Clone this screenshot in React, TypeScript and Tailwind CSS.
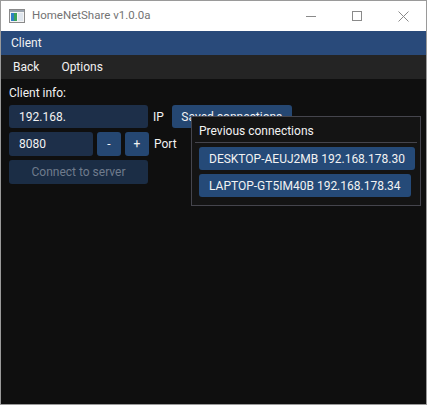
import React from "react";

const connections = [
  { host: "DESKTOP-AEUJ2MB", ip: "192.168.178.30" },
  { host: "LAPTOP-GT5IM40B", ip: "192.168.178.34" },
];

function AppIcon() {
  return (
    <svg width="16" height="14" viewBox="0 0 16 14">
      <rect x="0.5" y="0.5" width="15" height="13" fill="#f4f4f4" stroke="#8a8a8a" />
      <rect x="1" y="1" width="14" height="2" fill="#9aa4b0" />
      <rect x="2" y="4" width="3" height="8" fill="#2f7fc4" />
      <rect x="5" y="4" width="3" height="8" fill="#3aa35a" />
      <rect x="9" y="4" width="5" height="8" fill="#dfe6ee" />
    </svg>
  );
}

function TitleBar() {
  return (
    <div className="flex h-[30px] items-center bg-white">
      <div className="ml-[8px] flex w-[16px] items-center">
        <AppIcon />
      </div>
      <span className="ml-[7px] text-[11.5px] text-[#737373]">HomeNetShare v1.0.0a</span>
      <div className="ml-auto flex h-full items-center">
        <div className="flex w-[46px] items-center justify-center">
          <svg width="10" height="10" viewBox="0 0 10 10">
            <line x1="0" y1="5.5" x2="10" y2="5.5" stroke="#8a8a8a" strokeWidth="1" />
          </svg>
        </div>
        <div className="flex w-[46px] items-center justify-center">
          <svg width="10" height="10" viewBox="0 0 10 10">
            <rect x="0.5" y="0.5" width="9" height="9" fill="none" stroke="#8a8a8a" strokeWidth="1" />
          </svg>
        </div>
        <div className="flex w-[46px] items-center justify-center">
          <svg width="11" height="11" viewBox="0 0 11 11">
            <path d="M0.5 0.5 L10.5 10.5 M10.5 0.5 L0.5 10.5" stroke="#8a8a8a" strokeWidth="1" />
          </svg>
        </div>
      </div>
    </div>
  );
}

export default function App() {
  return (
    <div
      className="flex h-[405px] w-[427px] flex-col border border-[#9a9a9a] text-[12px] text-[#f2f2f2]"
      style={{ fontFamily: "Roboto, 'Liberation Sans', sans-serif" }}
    >
      <TitleBar />

      <div className="flex h-[24px] items-center bg-[#294a7a] pl-[10px]">Client</div>

      <div className="flex h-[24px] items-center gap-[22px] bg-[#242424] pl-[12px]">
        <span>Back</span>
        <span>Options</span>
      </div>

      <div className="relative flex flex-1 flex-col gap-[4px] bg-[#0f0f0f] px-[8px] pt-[7px]">
        <div className="leading-[15px]">Client info:</div>

        <div className="flex h-[23px] items-center">
          <div className="flex h-full w-[139px] items-center rounded-[3px] bg-[#1d2f49] pl-[10px]">192.168.</div>
          <span className="ml-[5px]">IP</span>
          <button className="ml-[8px] h-full w-[120px] whitespace-nowrap rounded-[3px] bg-[#254772] text-center">
            Saved connections
          </button>
        </div>

        <div className="flex h-[24px] items-center">
          <div className="flex h-full w-[84px] items-center rounded-[3px] bg-[#1d2f49] pl-[10px]">8080</div>
          <button className="ml-[4px] h-full w-[24px] rounded-[3px] bg-[#254772]">-</button>
          <button className="ml-[4px] h-full w-[24px] rounded-[3px] bg-[#254772]">+</button>
          <span className="ml-[5px]">Port</span>
        </div>

        <button className="h-[24px] w-[139px] whitespace-nowrap rounded-[3px] bg-[#1b2d45] text-center text-[#6f7b8c]">
          Connect to server
        </button>

        <div className="absolute left-[190px] top-[37px] flex h-[90px] w-[230px] flex-col border border-[#45454d] bg-[#141414]">
          <div className="pl-[7px] pt-[6px] leading-[17px]">Previous connections</div>
          <div className="mx-[3px] mt-[2px] h-px bg-[#45454d]" />
          <div className="mt-[4px] flex flex-col items-start gap-[4px] pl-[7px]">
            {connections.map((c) => (
              <button
                key={c.host}
                className="h-[23px] whitespace-nowrap rounded-[3px] bg-[#254a78] px-[10px] text-left"
              >
                {c.host} {c.ip}
              </button>
            ))}
          </div>
        </div>
      </div>
    </div>
  );
}
